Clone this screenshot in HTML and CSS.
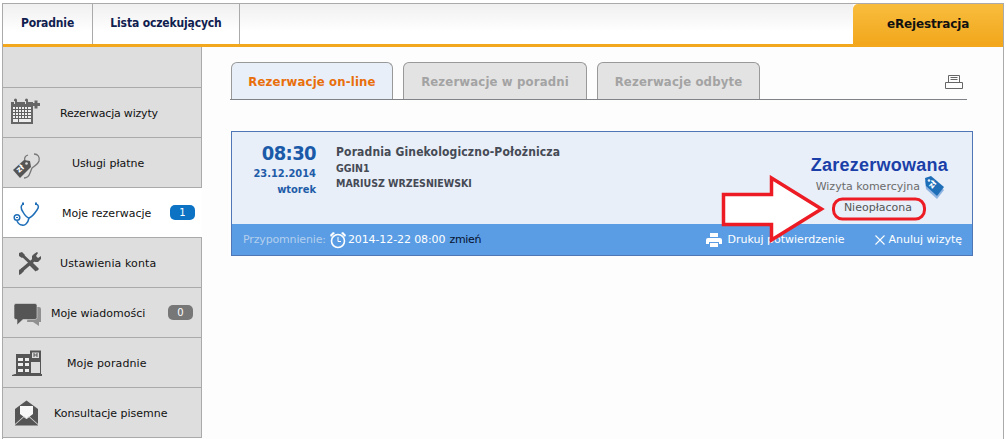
FILE: index.html
```html
<!DOCTYPE html>
<html lang="pl">
<head>
    <meta charset="UTF-8">
    <meta name="viewport" content="width=device-width, initial-scale=1.0">
    <title>Moje rezerwacje</title>
    <link rel="stylesheet" href="styles.css">
</head>
<body>
    <div class="page">
        <div class="topbar">
            <a class="top-link top-first">Poradnie</a>
            <a class="top-link top-second">Lista oczekujących</a>
            <div class="top-fill"></div>
            <a class="top-ereg">eRejestracja</a>
        </div>

        <div class="main">
            <div class="sidebar">
                <div class="side-blank"></div>
                <a class="side-item">
                    <svg class="side-icon" viewBox="0 0 32 28" width="32" height="28"><path fill="#666" d="M0 3h3V1a1 1 0 0 1 3 0v2h8V1a1 1 0 0 1 3 0v2h5v22H0z"/><path fill="#ddd" d="M3 2h1v3H3zm11 0h1v3h-1z"/><path fill="#eee" d="M2 8h18v15H2z"/><path fill="none" stroke="#606060" d="M4.500 8v12M7.500 8v15M10.500 8v12M13.500 8v12M16.500 8v12M2 10.500h18M2 13.500h18M2 16.500h18M2 19.500h18"/><path fill="#666" d="M23.500 1.500h3V4H29v3h-2.500v2.500h-3V7H21V4h2.500z"/></svg>
                    <span class="side-label side-l1">Rezerwacja wizyty</span>
                </a>
                <a class="side-item">
                    <svg class="side-icon" viewBox="0 0 32 28" width="32" height="28"><g fill="none" stroke="#777" stroke-width="1.300"><path d="M17 6c-3 1-4 3-3 6"/><path d="M23 5c4 0 6 3 5 7-1 3-4 5-7 7l-2 5c-1 3-3 5-6 5"/></g><path fill="#555" d="m2 21 11-10 6 1 1 6-11 11z"/><circle cx="15.500" cy="14.500" r="1.300" fill="#ddd"/><text class="tag-text" x="0" y="0" transform="translate(8 24) rotate(-42)">zł</text></svg>
                    <span class="side-label side-l2">Usługi płatne</span>
                </a>
                <a class="side-item side-active">
                    <svg class="side-icon" viewBox="0 0 32 28" width="32" height="28"><g fill="none" stroke="#1f6fb8" stroke-width="1.500"><path d="M12 5C9 7 10 10 12 13c2 4 5 6 6 6 3-1 6-5 8-8 2-3 2-5-1-6"/><path d="M18 19c-1 5-4 8-7 7-3 0-4-2-5-4"/><circle cx="6" cy="18.500" r="2.800"/></g><path fill="#1f6fb8" d="M11 3.500h2v2.500h-2zM24 3.500h2v2.500h-2zM5 18h2v1H5z"/></svg>
                    <span class="side-label side-l3">Moje rezerwacje</span>
                    <span class="badge badge-blue">1</span>
                </a>
                <a class="side-item">
                    <svg class="side-icon" viewBox="0 0 32 28" width="32" height="28"><g fill="none" stroke="#555"><path stroke-width="3" d="m11 6 16 15"/><path stroke-width="4" d="m19 14 7 7"/><path stroke-width="3.500" d="M25 9 11 21"/></g><path fill="#555" d="m8 4 3-1 3 3-3 3-3-2zM23 5l3-2 1 1-2 3 2 2 3-2 0 3-3 3h-3l-3-3v-3zM8 21l3-2 2 3-3 3-2 1z"/></svg>
                    <span class="side-label side-l4">Ustawienia konta</span>
                </a>
                <a class="side-item">
                    <svg class="side-icon" viewBox="0 0 32 28" width="32" height="28"><path fill="#909090" d="M18 8h10a2 2 0 0 1 2 2v13h-2v4l-6-4h-6z"/><path fill="#555" stroke="#ddd" stroke-width=".6" d="M5 4.500h19a2 2 0 0 1 2 2v12a2 2 0 0 1-2 2H12l-6 5.500v-5.500H5a2 2 0 0 1-2-2v-12a2 2 0 0 1 2-2z"/></svg>
                    <span class="side-label side-l5">Moje wiadomości</span>
                    <span class="badge badge-gray">0</span>
                </a>
                <a class="side-item">
                    <svg class="side-icon" viewBox="0 0 32 28" width="32" height="28"><path fill="#555" d="M5 5h14v6h11v14h1v2H1v-1l3-1h1z"/><path fill="#eee" d="M7 9h5v3H7zm7 0h4v3h-4zM7 14h5v3H7zm7 0h4v3h-4zM7 20h5v3H7zm7 0h4v3h-4z"/><path fill="#ddd" d="M20 13h9v11h-9z"/><path fill="#555" d="M19 1.500h11V11H19z"/><path fill="#ddd" d="M21 3.500h7V9h-7z"/><path fill="#555" d="M22.500 4h1v4h-1zm3 0h1v4h-1zM23 5.500h3v1h-3z"/></svg>
                    <span class="side-label side-l6">Moje poradnie</span>
                </a>
                <a class="side-item">
                    <svg class="side-icon" viewBox="0 0 32 28" width="32" height="28"><path fill="#555" d="M4 10 15.500 1.500 27 10v16.500H4z"/><path fill="#f8f8f8" d="M9 7h13v8l-6.500 5L9 15z"/><path fill="#ddd" d="m4 25 9-8 2.500 2 2.500-2 9 8v1L18 18l-2.500 2-2.500-2-9 8z"/></svg>
                    <span class="side-label side-l7">Konsultacje pisemne</span>
                </a>
            </div>

            <div class="content">
                <div class="tabs">
                    <a class="tab tab-on">Rezerwacje on-line</a>
                    <a class="tab">Rezerwacje w poradni</a>
                    <a class="tab">Rezerwacje odbyte</a>
                    <svg class="print-icon" viewBox="0 0 18 15" width="18" height="15"><path fill="none" stroke="#666" d="M3.500.5h11v7h-11zM5.500 2.500h7M5.500 4.500h7M.5 7.500h17v6H.5z"/></svg>
                </div>

                <div class="card">
                    <div class="card-body">
                        <div class="when">
                            <div class="when-time">08:30</div>
                            <div class="when-date">23.12.2014</div>
                            <div class="when-day">wtorek</div>
                        </div>
                        <div class="clinic">
                            <div class="clinic-name">Poradnia Ginekologiczno-Położnicza</div>
                            <div class="clinic-line">GGIN1</div>
                            <div class="clinic-line">MARIUSZ WRZESNIEWSKI</div>
                        </div>
                        <div class="status">
                            <div class="status-title">Zarezerwowana</div>
                            <div class="status-kind">Wizyta komercyjna
                                <svg class="tag-icon" viewBox="0 0 20 23" width="20" height="23"><path fill="#8fb3e0" d="m1 5 6-3 13 12-7 9L2 13z"/><path fill="#1f6fb8" d="m1 2 6-2 13 11-7 9L2 10z"/><circle cx="5" cy="4.500" r="1.300" fill="#e8eff9"/><text class="tag-text" x="0" y="0" transform="translate(8 13) rotate(-50)">zł</text></svg>
                            </div>
                            <div class="status-pay">Nieopłacona</div>
                        </div>
                    </div>
                    <div class="card-foot">
                        <span class="remind-label">Przypomnienie:</span>
                        <svg class="clock-icon" viewBox="0 0 18 18" width="18" height="18"><circle cx="9" cy="10" r="6.500" fill="none" stroke="#fff" stroke-width="1.600"/><path fill="none" stroke="#fff" d="M9 6v4.500h3"/><path fill="#fff" d="M1 4 4 1l2 1-4 4zM17 4l-3-3-2 1 4 4z"/></svg>
                        <span class="remind-date">2014-12-22 08:00</span>
                        <a class="remind-change">zmień</a>
                        <span class="foot-gap"></span>
                        <a class="foot-action foot-print">
                            <svg viewBox="0 0 16 14" width="16" height="14"><path fill="#fff" d="M4 0h8v4H4zM2 5h12a2 2 0 0 1 2 2v4h-3V9H3v2H0V7a2 2 0 0 1 2-2zM4 10h8v4H4z"/></svg>
                            Drukuj potwierdzenie
                        </a>
                        <a class="foot-action">
                            <svg viewBox="0 0 10 10" width="10" height="10"><path fill="none" stroke="#fff" stroke-width="1.100" d="m.5.5 9 9m0-9-9 9"/></svg>
                            Anuluj wizytę
                        </a>
                    </div>
                </div>
            </div>
        </div>

        <svg class="callout" viewBox="0 0 206 68" width="206" height="68">
            <path fill="#fff" stroke="#ed1c24" stroke-width="3.500" d="M3.500 19.500h48V3l50 31-50 31V49.500h-48z"/>
            <rect x="113.500" y="24" width="91" height="20" rx="9" fill="none" stroke="#ed1c24" stroke-width="3"/>
        </svg>
    </div>
</body>
</html>
```

FILE: styles.css
```css
* {
    margin: 0;
    padding: 0;
    box-sizing: border-box;
}

body {
    background-color: #fff;
    font-family: Tahoma, "DejaVu Sans", Verdana, sans-serif;
    font-size: 11px;
    overflow: hidden;
}

.page {
    position: relative;
    width: 1002px;
    height: 439px;
    margin: 3px 0 0 2px;
    border: 1px solid #aaa;
    border-bottom: none;
    background-color: #fdfdfd;
}

/* top bar */
.topbar {
    display: flex;
    height: 43px;
    border-bottom: 3px solid #f2a71d;
}

.top-link {
    display: flex;
    align-items: center;
    justify-content: center;
    border-right: 1px solid #aaa;
    background: linear-gradient(#f0f0f0, #fff 70%);
    color: #10204f;
    font-size: 12px;
    font-weight: bold;
    font-stretch: condensed;
    letter-spacing: -0.15px;
    padding-bottom: 2px;
}

.top-first {
    width: 90px;
}

.top-second {
    width: 147px;
}

.top-fill {
    flex: 1;
    background: linear-gradient(#f0f0f0, #fff 70%);
}

.top-ereg {
    display: flex;
    align-items: center;
    justify-content: center;
    width: 150px;
    border-radius: 5px 0 0 0;
    background: linear-gradient(#f8bd3d, #f2a71d);
    color: #111;
    font-size: 12px;
    font-weight: bold;
    letter-spacing: -0.15px;
}

.main {
    display: flex;
}

/* left menu */
.sidebar {
    width: 199px;
    flex-shrink: 0;
    background-color: #dedede;
    border-right: 1px solid #aaa;
}

.side-blank {
    height: 41px;
    border-bottom: 1px solid #aaa;
}

.side-item {
    display: flex;
    align-items: center;
    height: 50px;
    padding-left: 8px;
    border-bottom: 1px solid #aaa;
    color: #111;
}

.side-active {
    background-color: #fff;
    margin-right: -1px;
    position: relative;
}

.side-icon {
    flex-shrink: 0;
    overflow: visible;
}

.tag-text {
    fill: #fff;
    font-size: 8px;
    font-weight: bold;
}

.side-label {
    margin-top: 2px;
    white-space: nowrap;
}

.side-l1 { margin-left: 17px; letter-spacing: -0.2px; }
.side-l2 { margin-left: 29px; }
.side-l3 { margin-left: 19px; }
.side-l4 { margin-left: 17px; letter-spacing: 0.1px; }
.side-l5 { margin-left: 8px; }
.side-l6 { margin-left: 24px; letter-spacing: 0.1px; }
.side-l7 { margin-left: 11px; }

.badge {
    margin-left: auto;
    margin-right: 7px;
    width: 25px;
    height: 15px;
    border-radius: 5px;
    color: #fff;
    font-size: 10px;
    line-height: 15px;
    text-align: center;
}

.badge-blue {
    background-color: #0b72c4;
}

.badge-gray {
    background-color: #777;
    margin-right: 8px;
}

/* reservations */
.content {
    flex: 1;
    padding: 15px 30px 0 28px;
}

.tabs {
    position: relative;
    display: flex;
    gap: 10px;
    height: 38px;
    margin-right: 6px;
    padding-left: 1px;
    border-bottom: 1px solid #7f8287;
}

.tab {
    display: flex;
    align-items: center;
    justify-content: center;
    width: 184px;
    border: 1px solid #999;
    border-bottom: none;
    border-radius: 6px 6px 0 0;
    background-color: #e3e3e3;
    color: #a3a3a3;
    font-size: 13px;
    font-weight: bold;
    font-stretch: condensed;
    letter-spacing: 0.15px;
}

.tab:nth-child(1) {
    width: 162px;
}

.tab:nth-child(3) {
    width: 163px;
}

.tab-on {
    background-color: #e8eff9;
    color: #e96f0c;
}

.print-icon {
    position: absolute;
    right: 4px;
    top: 13px;
}

.card {
    margin-top: 31px;
    margin-left: 1px;
    border: 1px solid #4f76b5;
    background-color: #e8eff9;
}

.card-body {
    display: flex;
    height: 92px;
}

.when {
    width: 84px;
    padding-top: 9px;
    text-align: right;
    color: #1f5ca8;
    font-weight: bold;
    font-stretch: condensed;
    font-size: 11px;
    line-height: 16px;
}

.when-time {
    font-size: 20px;
    line-height: 24px;
    letter-spacing: -0.6px;
    color: #1a5aa8;
}

.when-date {
    margin-top: 1px;
}

.clinic {
    padding: 12px 0 0 20px;
    color: #454a55;
    font-weight: bold;
    font-stretch: condensed;
    font-size: 10.5px;
    line-height: 15px;
}

.clinic-name {
    font-size: 12px;
    line-height: 17px;
    letter-spacing: 0.15px;
}

.status {
    position: relative;
    margin-left: auto;
    padding: 22px 24px 0 0;
    width: 200px;
    text-align: right;
}

.status-title {
    color: #1b3fa8;
    font-family: "Liberation Sans", Arial, sans-serif;
    font-size: 18px;
    font-weight: bold;
    line-height: 22px;
    letter-spacing: 0.25px;
}

.status-kind {
    margin-top: 3px;
    color: #6b6b6b;
    line-height: 16px;
    padding-right: 28px;
    white-space: nowrap;
}

.tag-icon {
    position: absolute;
    right: 28px;
    top: 44px;
}

.status-pay {
    margin-top: 6px;
    padding-right: 36px;
    color: #555;
}

.card-foot {
    display: flex;
    align-items: center;
    height: 31px;
    padding: 0 10px 0 11px;
    background-color: #5a9de4;
    color: #fff;
    white-space: nowrap;
}

.remind-label {
    color: #b4cfee;
    letter-spacing: -0.15px;
}

.clock-icon {
    margin: 0 1px 0 3px;
}

.remind-date {
    letter-spacing: -0.1px;
}

.remind-change {
    margin-left: 4px;
    letter-spacing: -0.3px;
    color: #06122e;
}

.foot-gap {
    flex: 1;
}

.foot-action {
    display: flex;
    align-items: center;
    gap: 4px;
    margin-left: 30px;
}

.foot-print {
    gap: 6px;
}

/* red arrow and ring drawn over the card */
.callout {
    position: absolute;
    left: 717px;
    top: 171px;
}
```
